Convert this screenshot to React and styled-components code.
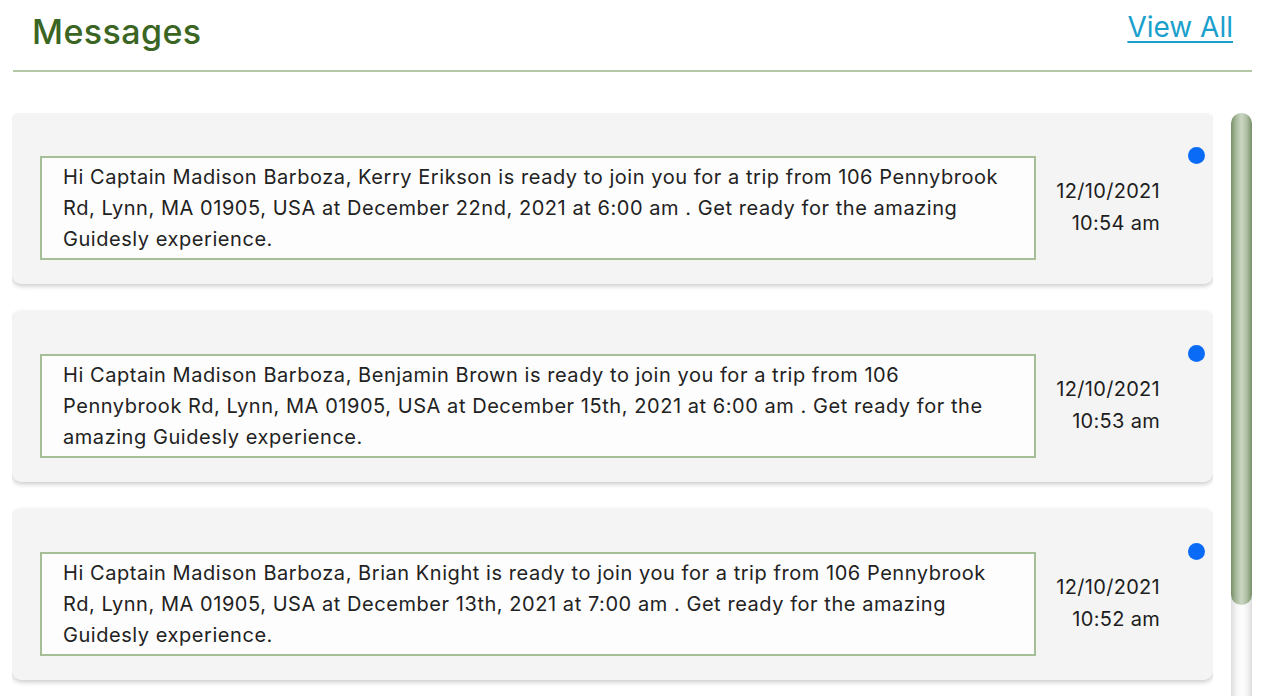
import styled, { createGlobalStyle } from 'styled-components';

const GlobalStyle = createGlobalStyle`
  html, body {
    margin: 0;
    padding: 0;
    background: #ffffff;
    font-family: Inter, "Open Sans", sans-serif;
    overflow: hidden;
  }
`;

const Page = styled.div`
  height: 696px;
  display: flex;
  flex-direction: column;
`;

const Header = styled.div`
  margin: 0 24px 0 13px;
  padding: 0 19px;
  height: 70px;
  display: flex;
  align-items: flex-start;
  justify-content: space-between;
  border-bottom: 2px solid #b4c8a6;
`;

const Title = styled.h2`
  margin: 11px 0 0;
  font-size: 34px;
  font-weight: 500;
  color: #3b6522;
  letter-spacing: 0.4px;
`;

const ViewAll = styled.a`
  margin-top: 10px;
  font-size: 28px;
  color: #1aa0cc;
  text-decoration: underline;
  text-underline-offset: 4px;
  text-decoration-thickness: 2px;
  cursor: pointer;
`;

const Body = styled.div`
  flex: 1;
  min-height: 0;
  margin: 41px 24px 0 12px;
  display: flex;
  gap: 18px;
`;

const List = styled.div`
  flex: 1;
  overflow: hidden;
  display: flex;
  flex-direction: column;
  gap: 27px;
  padding-bottom: 20px;
`;

const ScrollTrack = styled.div`
  width: 21px;
  flex-shrink: 0;
  border-radius: 10px 10px 0 0;
  background: linear-gradient(to right, #dedede, #f7f7f7 30%, #fdfdfd 55%, #f1f1f1 80%, #dcdcdc);
`;

const ScrollThumb = styled.div`
  height: 492px;
  border-radius: 11px;
  background: linear-gradient(to right, #768f69, #a9bb9e 25%, #cbd6c3 50%, #adbfa2 75%, #778f6a);
`;

const Card = styled.div`
  position: relative;
  flex-shrink: 0;
  height: 171px;
  box-sizing: border-box;
  padding: 43px 0 24px 28px;
  display: flex;
  align-items: center;
  background: #f4f4f4;
  border-radius: 9px;
  box-shadow: 0 2px 5px rgba(0, 0, 0, 0.22);
`;

const MessageBox = styled.div`
  width: 996px;
  height: 104px;
  box-sizing: border-box;
  flex-shrink: 0;
  padding: 4px 18px 0 21px;
  background: #fdfdfd;
  border: 2px solid #a6be97;
  font-size: 20px;
  line-height: 31px;
  letter-spacing: 0.55px;
  color: #222;
`;

const Stamp = styled.div`
  flex: 1;
  padding-right: 53px;
  padding-bottom: 3px;
  text-align: right;
  font-size: 20px;
  line-height: 32px;
  letter-spacing: 0.3px;
  color: #1d1d1d;
`;

const Dot = styled.span`
  position: absolute;
  top: 34px;
  right: 8px;
  width: 17px;
  height: 17px;
  border-radius: 50%;
  background: #0a6cf6;
`;

const messages = [
  {
    text: 'Hi Captain Madison Barboza, Kerry Erikson is ready to join you for a trip from 106 Pennybrook Rd, Lynn, MA 01905, USA at December 22nd, 2021 at 6:00 am . Get ready for the amazing Guidesly experience.',
    date: '12/10/2021',
    time: '10:54 am',
  },
  {
    text: 'Hi Captain Madison Barboza, Benjamin Brown is ready to join you for a trip from 106 Pennybrook Rd, Lynn, MA 01905, USA at December 15th, 2021 at 6:00 am . Get ready for the amazing Guidesly experience.',
    date: '12/10/2021',
    time: '10:53 am',
  },
  {
    text: 'Hi Captain Madison Barboza, Brian Knight is ready to join you for a trip from 106 Pennybrook Rd, Lynn, MA 01905, USA at December 13th, 2021 at 7:00 am . Get ready for the amazing Guidesly experience.',
    date: '12/10/2021',
    time: '10:52 am',
  },
];

const App = () => (
  <Page>
    <GlobalStyle />
    <Header>
      <Title>Messages</Title>
      <ViewAll>View All</ViewAll>
    </Header>
    <Body>
      <List>
        {messages.map((m) => (
          <Card key={m.time}>
            <MessageBox>{m.text}</MessageBox>
            <Stamp>
              {m.date}
              <br />
              {m.time}
            </Stamp>
            <Dot />
          </Card>
        ))}
      </List>
      <ScrollTrack>
        <ScrollThumb />
      </ScrollTrack>
    </Body>
  </Page>
);

export default App;
